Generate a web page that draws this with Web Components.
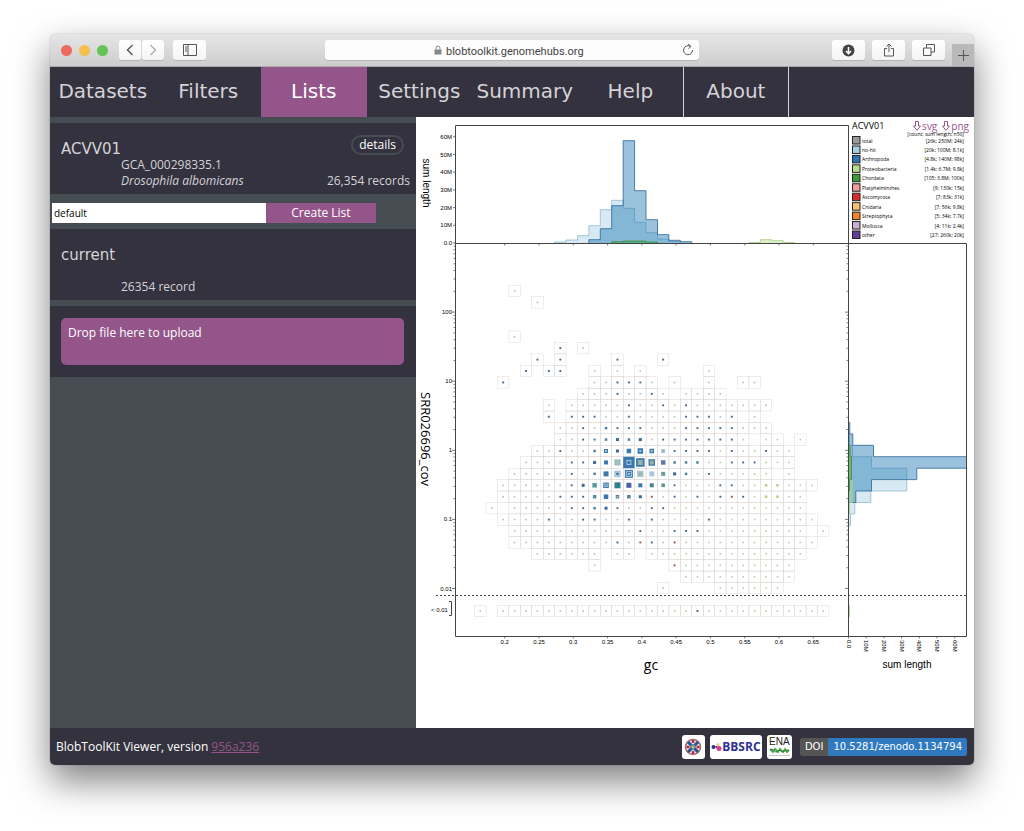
<!DOCTYPE html>
<html lang="en">
<head>
<meta charset="utf-8">
<title>BlobToolKit Viewer</title>
<style>
    body {
        --dark: #33323e;
        --slate: #464d52;
        --accent: #94558a;
        --pale: #d5d2d8;
        display: flex;
        box-sizing: border-box;
        min-height: 100vh;
        margin: 0;
        padding: 34px 50px 66px;
        background: #fff;
        font-family: "Open Sans", "Noto Sans", sans-serif;
        font-size: 12px;
        line-height: 16px;
    }
</style>
</head>
<body>
    <browser-window>
        <blob-nav></blob-nav>
        <main-layout>
            <list-panel slot="side"></list-panel>
            <blob-plot></blob-plot>
        </main-layout>
        <blob-footer></blob-footer>
    </browser-window>

<script>
class BrowserWindow extends HTMLElement {
    constructor() {
        super();
        this.shadowDOM = this.attachShadow({mode: "open"});
        this.render();
    }

    render() {
        this.shadowDOM.innerHTML = `
            <style>
                * {
                    margin: 0;
                    padding: 0;
                    box-sizing: border-box;
                }
                :host {
                    display: flex;
                    flex: 1;
                    min-width: 0;
                    flex-direction: column;
                    border-radius: 5px;
                    box-shadow: 0 0 1px rgba(0, 0, 0, 0.5), 0 16px 36px rgba(0, 0, 0, 0.5);
                    overflow: hidden;
                }
                header {
                    display: grid;
                    grid-template-columns: 1fr minmax(0, 374px) 1fr;
                    height: 33px;
                    background: linear-gradient(#e6e6e6, #cdcdcd);
                    border-bottom: 1px solid #a9a9a9;
                }
                .group {
                    display: flex;
                    align-items: center;
                }
                .left {
                    padding-left: 11px;
                }
                .right {
                    justify-content: flex-end;
                    gap: 7px;
                }
                .light {
                    width: 11px;
                    height: 11px;
                    margin-right: 7px;
                    border-radius: 50%;
                }
                button {
                    display: grid;
                    place-items: center;
                    width: 33px;
                    height: 20px;
                    border: 0;
                    border-radius: 3px;
                    background: linear-gradient(#fff, #f4f4f4);
                    box-shadow: 0 1px 0 #b5b5b5;
                }
                .step {
                    width: 22px;
                    margin-right: 1px;
                }
                .first {
                    margin-left: 4px;
                }
                .side {
                    margin-left: 8px;
                }
                .new-tab {
                    width: 22px;
                    height: 22px;
                    border-radius: 0;
                    background: #b9b9b9;
                    box-shadow: none;
                    align-self: flex-end;
                }
                .address {
                    display: flex;
                    align-items: center;
                    justify-content: center;
                    align-self: center;
                    position: relative;
                    height: 20px;
                    border-radius: 3px;
                    background: #fdfdfd;
                    box-shadow: 0 1px 0 #b5b5b5;
                }
                .address label {
                    display: flex;
                    align-items: center;
                    gap: 4px;
                }
                .address input {
                    width: 144px;
                    height: 18px;
                    padding-top: 2px;
                    border: 0;
                    background: none;
                    color: #444;
                    font: 11px/16px Roboto, sans-serif;
                }
                .address button {
                    position: absolute;
                    right: 0;
                    width: 22px;
                    background: none;
                    box-shadow: none;
                }
                svg {
                    display: block;
                    fill: none;
                    stroke: #555;
                }
            </style>
            <header>
                <div class="group left">
                    <span class="light" style="background: #ec6a5e"></span>
                    <span class="light" style="background: #f5bf4f"></span>
                    <span class="light" style="background: #61c454"></span>
                    <button class="step first" aria-label="Back"><svg width="8" height="12" stroke-width="1.4"><path d="M6.500 1 1.500 6l5 5"/></svg></button>
                    <button class="step" aria-label="Forward"><svg width="8" height="12" stroke-width="1.2" style="stroke: #aaa"><path d="M1.500 1l5 5-5 5"/></svg></button>
                    <button class="side" aria-label="Sidebar"><svg width="14" height="12"><path d="M.5 .5h13v11H.5zM5 .5v11M2 3h2M2 5h2M2 7h2"/></svg></button>
                </div>
                <div class="address">
                    <label>
                        <svg width="8" height="10" style="stroke: #888"><path d="M2 4.500V3a2 2 0 0 1 4 0v1.500"/><path d="M.5 4.500h7v5h-7z" fill="#888" stroke="none"/></svg>
                        <input value="blobtoolkit.genomehubs.org" aria-label="Address">
                    </label>
                    <button aria-label="Reload"><svg width="12" height="12"><path d="M10.500 6A4.500 4.500 0 1 1 8 2.200"/><path d="M6 0l3 2.300-2.500 2.500"/></svg></button>
                </div>
                <div class="group right">
                    <button aria-label="Downloads"><svg width="13" height="13"><circle cx="6.500" cy="6.500" r="6" fill="#444" stroke="none"/><path d="M6.500 3v6.500M4 7l2.500 2.700L9 7" stroke="#fff" stroke-width="1.500"/></svg></button>
                    <button aria-label="Share"><svg width="12" height="14"><path d="M4 5.500H1.500v7.500h9V5.500H8M6 9V1M3.500 3.500 6 1l2.500 2.500"/></svg></button>
                    <button aria-label="Tabs"><svg width="12" height="12"><path d="M.5 4h7.500v7.500H.5zM3.500 4V.5h8V8H8"/></svg></button>
                    <button class="new-tab" aria-label="New tab"><svg width="11" height="11"><path d="M5.500 0v11M0 5.500h11"/></svg></button>
                </div>
            </header>
            <slot></slot>`;
    }
}

class BlobNav extends HTMLElement {
    constructor() {
        super();
        this.shadowDOM = this.attachShadow({mode: "open"});
        this.tabs = ["Datasets", "Filters", "Lists", "Settings", "Summary", "Help", "About"];
        this.render();
    }

    render() {
        this.shadowDOM.innerHTML = `
            <style>
                :host {
                    display: block;
                    background: var(--dark);
                }
                nav {
                    display: flex;
                    height: 50px;
                }
                a {
                    flex: 0 0 11.42%;
                    box-sizing: border-box;
                    color: var(--pale);
                    font: 20px/48px "DejaVu Sans", sans-serif;
                    text-align: center;
                    text-decoration: none;
                }
                .active {
                    background: var(--accent);
                    color: #fff;
                }
                a:last-child {
                    border: solid #d5d2d8;
                    border-width: 0 1px;
                }
            </style>
            <nav>
                ${this.tabs.map(tab => `<a href="#${tab}" class="${tab === "Lists" ? "active" : ""}">${tab}</a>`).join("")}
            </nav>`;
    }
}

class MainLayout extends HTMLElement {
    constructor() {
        super();
        this.shadowDOM = this.attachShadow({mode: "open"});
        this.shadowDOM.innerHTML = `
            <style>
                :host {
                    display: grid;
                    flex: 1;
                    grid-template-columns: 366fr 558fr;
                    background: #fff;
                }
                aside {
                    background: var(--slate);
                }
            </style>
            <aside><slot name="side"></slot></aside>
            <main><slot></slot></main>`;
    }
}

class ListPanel extends HTMLElement {
    constructor() {
        super();
        this.shadowDOM = this.attachShadow({mode: "open"});
        this.render();
    }

    render() {
        this.shadowDOM.innerHTML = `
            <style>
                * {
                    margin: 0;
                    padding: 0;
                    box-sizing: border-box;
                }
                :host {
                    display: block;
                    padding-top: 6px;
                    color: var(--pale);
                }
                section {
                    min-height: 71px;
                    padding: 12px 6px 5px 11px;
                    background: var(--dark);
                }
                section + section {
                    margin-top: 6px;
                }
                .row {
                    display: flex;
                    justify-content: space-between;
                }
                .title {
                    height: 22px;
                    padding-right: 6px;
                }
                h2 {
                    padding-top: 4px;
                    font: 15px/20px "DejaVu Sans", sans-serif;
                }
                .info {
                    padding-left: 60px;
                }
                .last {
                    padding-top: 16px;
                }
                form {
                    display: flex;
                    padding: 9px 40px 6px 2px;
                }
                input {
                    flex: 1;
                    min-width: 0;
                    height: 20px;
                    padding-left: 2px;
                    border: 0;
                    background: #fff;
                    color: #000;
                    font: 10px/16px "Open Sans", sans-serif;
                }
                button {
                    border: 0;
                    background: var(--accent);
                    color: #fff;
                    font: inherit;
                }
                .create {
                    flex: 0 0 34%;
                }
                .details {
                    height: 20px;
                    padding: 0 6px;
                    border: 2px solid var(--slate);
                    border-radius: 10px;
                    background: none;
                }
                .drop {
                    display: flex;
                    width: calc(100% - 6px);
                    height: 47px;
                    padding: 7px;
                    border-radius: 5px;
                }
            </style>
            <section>
                <div class="row title"><h2>ACVV01</h2><button class="details">details</button></div>
                <p class="info">GCA_000298335.1</p>
                <div class="row"><p class="info"><i>Drosophila albomicans</i></p><p>26,354 records</p></div>
            </section>
            <form>
                <input type="text" value="default" aria-label="List name">
                <button type="button" class="create">Create List</button>
            </form>
            <section>
                <div class="row title"><h2>current</h2></div>
                <p class="info last">26354 record</p>
            </section>
            <section>
                <button class="drop">Drop file here to upload</button>
            </section>`;
    }
}

const CELL = 11.43;

// one character per gc bin: . faint, b small, s/S larger, G green, r red, X nested squares listed below
const BINS = {
    0: "   .",
    1: "     .",
    4: "   .",
    5: "       b .",
    6: "     b b    b   b",
    7: "    b bb  . . .     .",
    8: "  b       ..bbb. .  .  ..",
    9: "         ...b..b. ....",
    10: "      . .....b..b.b.......",
    11: "      b bbb..b....bbb.b .",
    12: "       ..b.sbbb...bbbbb...",
    13: "       ..bbsSsS.bbbbbbb. .. .",
    14: "     ..b..sXSXXXXbbbb.b..b..",
    15: "    ....bbSXXXXXXsss..bbb...",
    16: "   .....b.sXXXXXXSs.b..... .",
    17: "  ......bSXXXXXXXb...bb..GG...",
    18: "  .....bbbXXXXSr.b.b.brb.GG..",
    19: " . .....bbsSb..bb............",
    20: "  ....b..bb..b.b....b.........",
    21: "   ...........b..bbb......... .",
    22: "   .........b.rb.r............",
    23: "     ...... .. ..............",
    24: "          .      r..........",
    25: "                  ..........",
    26: "                .    ......",
    28: ". .................b..........."
};

const MARKS = {
    ".": [1.6, "#b4bfc2"],
    b: [1.9, "#3d6a92"],
    s: [2.5, "#4f8198"],
    S: [3, "#3a6899"],
    G: [2.6, "#b5d08a"],
    r: [1.9, "#a84848"]
};

const BLUE = "#3a78b0";
const PALE_BLUE = "#a9c8dc";

// [column, row, [size, fill], ...] drawn from the outside in
const NESTED = [
    [11, 14, [4, BLUE], [2, PALE_BLUE]],
    [13, 14, [4.5, BLUE]],
    [14, 14, [5.5, BLUE], [2, PALE_BLUE]],
    [15, 14, [4.5, BLUE], [2, PALE_BLUE]],
    [16, 14, [4, PALE_BLUE], [2, "#8fb3bd"]],
    [11, 15, [4, BLUE]],
    [12, 15, [6, "#8db3bd"], [4, "#a4c4b9"]],
    [13, 15, [11.4, BLUE], [5, PALE_BLUE], [3, BLUE]],
    [14, 15, [8.5, BLUE], [5, "#98b2a4"]],
    [15, 15, [6.5, BLUE], [4, "#98b2a4"]],
    [16, 15, [4.5, "#5f79ad"]],
    [11, 16, [5, BLUE]],
    [12, 16, [6.5, PALE_BLUE], [2, "#2d5c88"]],
    [13, 16, [8, BLUE], [6, PALE_BLUE], [4, BLUE], [2, PALE_BLUE]],
    [14, 16, [6.5, "#b3c6c9"], [3, "#98b2b5"]],
    [15, 16, [5, PALE_BLUE]],
    [16, 16, [4, "#6a9e9a"]],
    [10, 17, [4.5, "#5b9aa0"]],
    [11, 17, [5.5, BLUE], [3.5, PALE_BLUE], [1.5, BLUE]],
    [12, 17, [6, "#2f808e"]],
    [13, 17, [5, "#4a63a3"]],
    [14, 17, [4, BLUE]],
    [15, 17, [4, "#4b8091"]],
    [16, 17, [3.5, "#5b9480"]],
    [10, 18, [3.5, "#568da8"]],
    [11, 18, [4.5, BLUE]],
    [12, 18, [3.5, "#5f7f9a"], [1.5, PALE_BLUE]],
    [13, 18, [3.5, "#4f8198"]]
];

// [fill, stroke, first bin, heights]
const TOP_SERIES = [
    ["#a6cee3", "#8fb9d2", 7, [1, 3, 7.3, 17.3, 33.3, 42.7, 34.7, 20.7, 10.3, 4, 1.5]],
    ["#1f78b4", "#2a6496", 10, [3.3, 14.3, 37.3, 102.3, 52.3, 23.3, 8.3, 2.7, 1.3]],
    ["#33a02c", "#3a8f3a", 12, [1.2, 2, 2, 1]],
    ["#b2df8a", "#a4cc80", 24, [0.5, 3.3, 2.3, 0.5]]
];

const SIDE_SERIES = [
    ["#a6cee3", "#8fb9d2", 13, [1, 4, 23, 58.3, 58.3, 22.3, 6.3, 2]],
    ["#1f78b4", "#2a6496", 12, [1.3, 4.3, 25, 118, 68.3, 23, 7.3]],
    ["#b2df8a", "#a4cc80", 14, [1, 2, 3, 4, 4, 1]],
    ["#b2df8a", "#a4cc80", 28, [1]],
    ["#33a02c", "#3a8f3a", 14, [1.5, 3, 3, 1]]
];

const LEGEND = [
    ["total", "#999999", "[26k; 250M; 24k]"],
    ["no-hit", "#a6cee3", "[20k; 100M; 8.1k]"],
    ["Arthropoda", "#2f75b5", "[4.8k; 140M; 98k]"],
    ["Proteobacteria", "#b9dc8c", "[1.4k; 6.7M; 9.8k]"],
    ["Chordata", "#3f9b3a", "[105; 3.8M; 100k]"],
    ["Platyhelminthes", "#f29a9a", "[9; 130k; 15k]"],
    ["Ascomycota", "#d92b27", "[7; 83k; 31k]"],
    ["Cnidaria", "#fbbf70", "[7; 56k; 9.8k]"],
    ["Streptophyta", "#f98228", "[5; 34k; 7.7k]"],
    ["Mollusca", "#c8afd4", "[4; 11k; 2.4k]"],
    ["other", "#5f3f98", "[27; 260k; 20k]"]
];

class BlobPlot extends HTMLElement {
    constructor() {
        super();
        this.shadowDOM = this.attachShadow({mode: "open"});
        this.render();
    }

    x(column) {
        return 64.3 + CELL * column;
    }

    y(row) {
        return 174 + CELL * row;
    }

    square(cx, cy, size, fill) {
        return `<rect x="${(cx - size / 2).toFixed(2)}" y="${(cy - size / 2).toFixed(2)}" width="${size}" height="${size}" fill="${fill}"/>`;
    }

    bins() {
        let cells = "";
        let marks = "";
        Object.entries(BINS).forEach(([row, line]) => {
            const cy = this.y(Number(row));
            [...line].forEach((char, column) => {
                if (char === " ") return;
                const cx = this.x(column);
                cells += this.square(cx, cy, CELL, "none");
                if (char === "X") return;
                let [size, fill] = MARKS[char];
                if (char === "." && column > 16 && row > 12) fill = "#bccba2";
                marks += this.square(cx, cy, size, fill);
            });
        });
        NESTED.forEach(([column, row, ...layers]) => {
            layers.forEach(([size, fill]) => {
                marks += this.square(this.x(column), this.y(row), size, fill);
            });
        });
        return `<g class="cells">${cells}</g>${marks}`;
    }

    topHistogram() {
        return TOP_SERIES.map(([fill, stroke, first, heights]) => {
            let d = `M${this.x(first - 0.5)} 126`;
            heights.forEach((h, i) => {
                d += `V${126 - h}H${this.x(first + i + 0.5).toFixed(1)}`;
            });
            return `<path d="${d}V126" fill="${fill}" stroke="${stroke}" class="hist"/>`;
        }).join("");
    }

    sideHistogram() {
        return SIDE_SERIES.map(([fill, stroke, first, widths]) => {
            let d = `M432.500 ${this.y(first - 0.5)}`;
            widths.forEach((w, i) => {
                d += `H${432.5 + w}V${this.y(first + i + 0.5).toFixed(1)}`;
            });
            return `<path d="${d}H432.500" fill="${fill}" stroke="${stroke}" class="hist"/>`;
        }).join("");
    }

    axes() {
        let ticks = "";
        let labels = "";
        for (let i = 0; i < 7; i++) {
            const name = i ? i * 10 + "M" : "0.0";
            const offset = i * 17.7;
            ticks += `M37 ${126 - offset}h2.500M${432.5 + offset} 519v2.500`;
            labels += `<text x="36" y="${128 - offset}" text-anchor="end">${name}</text>`;
            labels += `<text transform="translate(${430.5 + offset} 523) rotate(90)">${name}</text>`;
        }
        ["0.2", "0.25", "0.3", "0.35", "0.4", "0.45", "0.5", "0.55", "0.6", "0.65"].forEach((name, i) => {
            const x = 88.7 + i * CELL * 3;
            ticks += `M${x} 519v2.500M${x} 126v2.500`;
            labels += `<text x="${x}" y="527" text-anchor="middle">${name}</text>`;
        });
        // log scale, three decades above and two below 1
        for (let power = -2; power < 3; power++) {
            const base = 333.3 - power * 69.1;
            labels += `<text x="36" y="${base + 2}" text-anchor="end">${10 ** power}</text>`;
            for (let n = 1; n < 10; n++) {
                const y = (base - Math.log10(n) * 69.1).toFixed(1);
                const length = n === 1 ? 3.5 : 2;
                ticks += `M39.500 ${y}h-${length}M432.500 ${y}h-${length}`;
            }
        }
        return `<path d="${ticks}" class="ticks"/><g class="small">${labels}</g>`;
    }

    legend() {
        return LEGEND.map(([name, fill, counts], i) => {
            const y = 23.5 + i * 9.45;
            return `<rect x="436.500" y="${y - 4}" width="7.500" height="7.500" fill="${fill}" stroke="#222"/>
                <text x="446" y="${y + 2}">${name}</text>
                <text x="548" y="${y + 2}" text-anchor="end">${counts}</text>`;
        }).join("");
    }

    render() {
        this.shadowDOM.innerHTML = `
            <style>
                :host {
                    display: block;
                    position: relative;
                }
                svg {
                    display: block;
                }
                .plot {
                    width: 100%;
                    font-family: "Liberation Sans", sans-serif;
                    font-size: 10px;
                }
                .cells {
                    stroke: #d6d0d0;
                    stroke-width: 0.4;
                }
                .hist {
                    fill-opacity: 0.45;
                    stroke-width: 0.8;
                }
                .frame {
                    fill: none;
                    stroke: #444;
                }
                .ticks {
                    stroke: #444;
                    stroke-width: 0.7;
                }
                .small {
                    font-size: 6px;
                }
                .open {
                    font-family: "Open Sans", sans-serif;
                }
                .legend {
                    font-size: 5px;
                }
                .links {
                    position: absolute;
                    top: 3px;
                    right: 5px;
                    display: flex;
                    gap: 5px;
                    background: #fff;
                    line-height: 12px;
                }
                a {
                    display: flex;
                    align-items: center;
                    gap: 1px;
                    color: var(--accent);
                    font-size: 10px;
                    text-decoration: none;
                }
            </style>
            <svg class="plot" viewBox="0 0 558 611">
                ${this.bins()}
                ${this.topHistogram()}
                ${this.sideHistogram()}
                <path class="frame" d="M39.500 8.500H432.500V519.500H39.500zM39.500 126.500H550.500V519.500H432.500"/>
                <path class="frame" d="M20 478.500H550.500" stroke-dasharray="2 2"/>
                <path class="frame" d="M33 484.500h2.500v14H33"/>
                ${this.axes()}
                <text class="small" x="15" y="495">&lt; 0.01</text>
                <text transform="translate(7 66) rotate(90)" text-anchor="middle">sum length</text>
                <text x="491" y="551" text-anchor="middle">sum length</text>
                <g class="open">
                    <text transform="translate(5 322) rotate(90)" text-anchor="middle" font-size="13">SRR026696_cov</text>
                    <text x="235" y="553" text-anchor="middle" font-size="14">gc</text>
                    <text x="436" y="12" font-size="9">ACVV01</text>
                    <g class="legend">
                        <text x="548" y="19" text-anchor="end">[count; sum length; n50]</text>
                        ${this.legend()}
                    </g>
                </g>
            </svg>
            <div class="links">
                <a href="#svg"><svg width="8" height="10" fill="none" stroke="#94558a"><path d="M2.500 .5h3v4.500h2L4 9.300.500 5h2z"/></svg>svg</a>
                <a href="#png"><svg width="8" height="10" fill="none" stroke="#94558a"><path d="M2.500 .5h3v4.500h2L4 9.300.500 5h2z"/></svg>png</a>
            </div>`;
    }
}

class BlobFooter extends HTMLElement {
    constructor() {
        super();
        this.shadowDOM = this.attachShadow({mode: "open"});
        this.shadowDOM.innerHTML = `
            <style>
                :host {
                    display: flex;
                    align-items: center;
                    justify-content: space-between;
                    height: 37px;
                    padding: 0 7px 0 6px;
                    box-sizing: border-box;
                    background: var(--dark);
                    color: #fff;
                }
                a {
                    color: var(--accent);
                }
                .logos {
                    display: flex;
                    align-items: center;
                    gap: 5px;
                }
                .logos a {
                    display: flex;
                    align-items: center;
                    justify-content: center;
                    height: 24px;
                    border-radius: 3px;
                    background: #fff;
                    text-decoration: none;
                }
                .crest {
                    width: 23px;
                }
                .logos .bbsrc {
                    width: 52px;
                    color: #2e3192;
                    font: bold 12px/16px "Open Sans", sans-serif;
                }
                .logos .ena {
                    width: 25px;
                    flex-direction: column;
                    color: #222;
                    font: 10px/10px "Liberation Sans", sans-serif;
                }
                .logos .doi {
                    height: 18px;
                    margin-left: 3px;
                    background: #555;
                    color: #fff;
                    font: 10px/18px "DejaVu Sans", sans-serif;
                    overflow: hidden;
                }
                .doi span {
                    padding: 0 5px;
                }
                .doi span + span {
                    background: #2f7abf;
                }
            </style>
            <p>BlobToolKit Viewer, version <a href="#version">956a236</a></p>
            <div class="logos">
                <a class="crest" href="#ed" aria-label="University of Edinburgh"><svg width="18" height="18">
                    <circle cx="9" cy="9" r="7.500" fill="#e9e6ee" stroke="#a96a72" stroke-width="1.500"/>
                    <path d="M4 4l10 10M14 4 4 14" stroke="#29528a" stroke-width="3"/>
                    <path d="M9 2v3M9 13v3M2.500 9h3M12.500 9h3" stroke="#b5303a" stroke-width="2.500"/>
                    <path d="M6.500 6.500h5v3.500L9 12.500 6.500 10z" fill="#4f86b5"/>
                    <circle cx="9" cy="9" r="1.500" fill="#d9b455"/>
                </svg></a>
                <a class="bbsrc" href="#bbsrc"><svg width="11" height="10">
                    <circle cx="2.500" cy="5" r="2" fill="#2e3192"/><circle cx="7" cy="2.500" r="1.500" fill="#f3c98b"/>
                    <circle cx="5.500" cy="5" r="1.200" fill="#7b3f8c"/><circle cx="8" cy="6.500" r="2.500" fill="#d8418a"/>
                </svg>BBSRC</a>
                <a class="ena" href="#ena">ENA<svg width="21" height="10" fill="none" stroke="#4ea64a">
                    <path d="M1 2l3 3 2-3 3 3 2-3 3 3 2-3 2 3 2-2" stroke-width="1.800"/>
                    <path d="M1 3.500q2-3 4 0t3 1 3-1 3 1 3-1 3 0" stroke="#2f7d3a"/>
                    <path d="M0 8.500h21" stroke="#aaa" stroke-width=".7"/>
                </svg></a>
                <a class="doi" href="#doi"><span>DOI</span><span>10.5281/zenodo.1134794</span></a>
            </div>`;
    }
}

customElements.define("browser-window", BrowserWindow);
customElements.define("blob-nav", BlobNav);
customElements.define("main-layout", MainLayout);
customElements.define("list-panel", ListPanel);
customElements.define("blob-plot", BlobPlot);
customElements.define("blob-footer", BlobFooter);
</script>
</body>
</html>
